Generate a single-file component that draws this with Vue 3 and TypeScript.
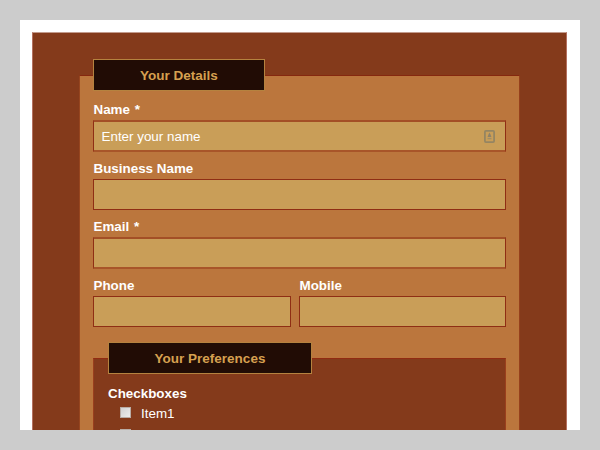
<script setup lang="ts">
import { ref } from 'vue'

interface Field {
  id: string
  label: string
  placeholder?: string
  soft?: boolean
}

const fields: Field[] = [
  { id: 'name', label: 'Name *', placeholder: 'Enter your name', soft: true },
  { id: 'business', label: 'Business Name' },
  { id: 'email', label: 'Email *', soft: true },
]
const phones: Field[] = [
  { id: 'phone', label: 'Phone' },
  { id: 'mobile', label: 'Mobile' },
]
const values = ref<Record<string, string>>({})
const options = ['Item1', '']
</script>

<template>
  <div class="page">
    <main class="sheet">
      <form class="form">
        <section class="details">
          <h2 class="legend">Your Details</h2>
          <div v-for="f in fields" :key="f.id" class="field" :class="{ soft: f.soft }">
            <label :for="f.id">{{ f.label }}</label>
            <div class="box">
              <input :id="f.id" v-model="values[f.id]" type="text" :placeholder="f.placeholder" />
              <svg v-if="f.id === 'name'" class="card" width="11" height="13" viewBox="0 0 11 13">
                <rect x="0.9" y="0.9" width="9.2" height="11.2" rx="1" fill="none" stroke="#958562" stroke-width="1.8" />
                <path d="M5.5 2.6 L6.6 4.8 L7.4 6.9 H3.6 L4.4 4.8 Z" fill="#8d8169" />
                <path d="M3.5 8.6 H7.5" stroke="#a08d66" stroke-width="1.4" />
              </svg>
            </div>
          </div>
          <div class="pair">
            <div v-for="f in phones" :key="f.id" class="field">
              <label :for="f.id">{{ f.label }}</label>
              <div class="box"><input :id="f.id" v-model="values[f.id]" type="text" /></div>
            </div>
          </div>
          <section class="preferences">
            <h2 class="legend wide">Your Preferences</h2>
            <div class="group">Checkboxes</div>
            <label v-for="(o, i) in options" :key="i" class="option">
              <input type="checkbox" />
              <span>{{ o }}</span>
            </label>
          </section>
        </section>
      </form>
    </main>
  </div>
</template>

<style>
body {
  margin: 0;
  overflow: hidden;
}
</style>

<style scoped>
* {
  box-sizing: border-box;
}
.page {
  width: 600px;
  height: 450px;
  padding: 20px;
  background: #ccc;
  font-family: "Liberation Sans", Arial, sans-serif;
  font-size: 13.4px;
  color: #fff;
}
.sheet {
  height: 410px;
  padding: 12px 13px 0 12px;
  background: #fff;
  overflow: hidden;
}
.form {
  height: 500px;
  padding: 42px 47px 0;
  background: #843a1b;
  border: 1px solid #b4705f;
  border-top-color: #c39b8d;
  border-bottom: 0;
}
.details {
  width: 441px;
  height: 420px;
  margin-left: -1px;
  padding: 0 13px;
  background: #bb763d;
  border: 1px solid #96401c;
  border-top-color: #85280f;
  border-left-color: #96451f;
}
.legend {
  width: 172px;
  height: 32px;
  margin: -17px 0 0;
  border: 1px solid #b5823f;
  background: #210c05;
  color: #d6a050;
  font-size: 13.5px;
  font-weight: bold;
  line-height: 31px;
  text-align: center;
}
.field {
  display: flex;
  flex-direction: column;
}
.details > .field,
.pair {
  height: 58px;
}
.details > .field:nth-of-type(2) {
  height: 59px;
}
.field > label {
  flex: none;
  height: 30px;
  padding: 12px 0 0 0.5px;
  font-weight: bold;
  line-height: 16px;
  white-space: nowrap;
}
.field.soft > label {
  height: 29px;
  padding-top: 11px;
  word-spacing: 1px;
}
.box {
  display: flex;
  align-items: center;
  flex: none;
  height: 31px;
  padding: 0 10px 0 7.5px;
  background: #c99e58;
  border: 1px solid #8f2e14;
}
.soft .box {
  height: 32px;
  border-top: 2px solid #a34f26;
  border-bottom: 2px solid #a85529;
}
.box input {
  flex: 1;
  min-width: 0;
  height: 24px;
  padding: 0;
  border: 0;
  outline: 0;
  background: transparent;
  color: #fff;
  font: inherit;
}
.box input::placeholder {
  color: #fff;
  opacity: 1;
}
.card {
  flex: none;
}
.pair {
  display: grid;
  grid-template-columns: 198px 207px;
  column-gap: 8px;
}
.preferences {
  height: 120px;
  margin-top: 34px;
  padding-left: 14px;
  background: #843a1b;
  border: 1px solid #9a3f1d;
  border-top-color: #902b12;
}
.wide {
  width: 204px;
}
.group {
  height: 28px;
  padding-top: 10px;
  font-weight: bold;
  line-height: 19px;
}
.option {
  display: flex;
  align-items: center;
  height: 22px;
  padding-left: 12px;
}
.option input {
  appearance: none;
  width: 11px;
  height: 11px;
  margin: 0 10px 2px 0;
  border: 1px solid #b9aca5;
  background: linear-gradient(135deg, #d2d2d2, #ededed);
}
</style>
